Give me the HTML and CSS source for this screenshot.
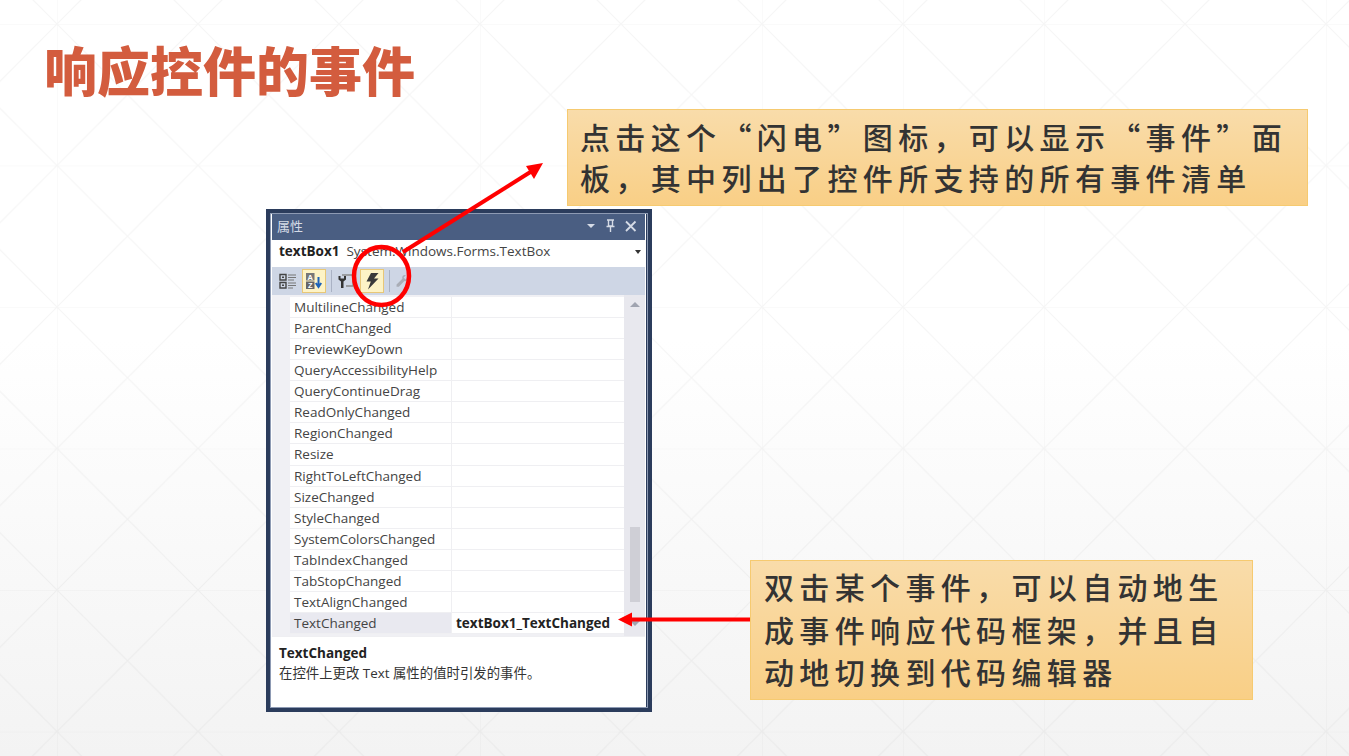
FILE: index.html
```html
<!DOCTYPE html>
<html lang="zh-CN">

<head>
    <meta charset="UTF-8">
    <title>响应控件的事件</title>
    <link rel="stylesheet" href="styles.css">
</head>

<body>
    <div class="slide">
        <!-- fondo de rejilla -->
        <svg class="fondo" width="1349" height="756">
            <defs>
                <pattern id="rejilla" x="57" y="24" width="141" height="141.5" patternUnits="userSpaceOnUse">
                    <path d="M0 0H141M0 0V141.5M0 0L141 141.5M141 0L0 141.5" fill="none" stroke="#000" stroke-opacity="0.035" stroke-width="1"/>
                </pattern>
            </defs>
            <rect width="1349" height="756" fill="url(#rejilla)"/>
        </svg>

        <h1 class="titulo">响应控件的事件</h1>

        <section class="panel">
            <div class="panel-titulo">
                <span class="panel-nombre">属性</span>
                <svg class="panel-iconos" width="52" height="14" viewBox="0 0 52 14">
                    <path d="M0 5H8L4 9Z" fill="#d5dbe6"/>
                    <path d="M20 1H27M21.5 1V7H25.5V1M19.5 7.500H27.5M23.5 8V13" fill="none" stroke="#d5dbe6" stroke-width="1.4"/>
                    <path d="M39 2.500L48.5 12M48.5 2.500L39 12" fill="none" stroke="#d5dbe6" stroke-width="1.8"/>
                </svg>
            </div>
            <div class="panel-objeto">
                <b>textBox1</b>
                <span class="panel-tipo">System.Windows.Forms.TextBox</span>
                <i class="flechita"></i>
            </div>
            <div class="toolbar">
                <span class="tool">
                    <svg width="18" height="18" viewBox="0 0 18 18">
                        <path d="M1 2.500H7V8H1ZM1 10.500H7V16H1Z" fill="none" stroke="#444" stroke-width="1.4"/>
                        <path d="M3 4.500H5V6H3ZM3 12.500H5V14H3Z" fill="#444"/>
                        <path d="M9 3H17M9 5.500H17M9 8H15M9 11H17M9 13.500H17M9 16H14" stroke="#777" stroke-width="1.2"/>
                    </svg>
                </span>
                <span class="tool activo">
                    <svg width="18" height="18" viewBox="0 0 18 18">
                        <rect x="1" y="1" width="8.500" height="7.500" fill="#777"/>
                        <rect x="1" y="9.500" width="8.500" height="7.500" fill="#666"/>
                        <text x="5.200" y="7.600" class="az">A</text>
                        <text x="5.200" y="16" class="az">Z</text>
                        <path d="M13.500 5V14M10.800 11L13.500 15L16.200 11" fill="none" stroke="#1d63b8" stroke-width="2"/>
                    </svg>
                </span>
                <i class="tool-sep"></i>
                <span class="tool">
                    <svg width="18" height="18" viewBox="0 0 18 18">
                        <path d="M5 3H16V14H9" fill="none" stroke="#8a8a8a" stroke-width="1.3"/>
                        <path d="M1.500 4V7.500L4 9.500V16H6.500V9.500L9 7.500V4L7 4V6.500H3.500V4Z" fill="#333"/>
                    </svg>
                </span>
                <span class="tool activo">
                    <svg width="18" height="18" viewBox="0 0 18 18">
                        <path d="M8 1H15.500L11 6.500H15.500L5 17.500L7.800 9.500H3.500Z" fill="#3a3a3a"/>
                    </svg>
                </span>
                <i class="tool-sep"></i>
                <span class="tool llave">
                    <svg width="14" height="14" viewBox="0 0 18 18">
                        <path d="M17 4L13.500 7L11 4.500L14 1.500C11 .5 8.500 3 9.500 6L2 13.500V16.500H5L12 9C15 10 17.500 7.500 17 4Z" fill="#a9adb6"/>
                    </svg>
                </span>
            </div>
            <div class="rejilla">
                <div class="filas">
                    <div class="fila"><span class="nombre">MultilineChanged</span><span class="valor"></span></div>
                    <div class="fila"><span class="nombre">ParentChanged</span><span class="valor"></span></div>
                    <div class="fila"><span class="nombre">PreviewKeyDown</span><span class="valor"></span></div>
                    <div class="fila"><span class="nombre">QueryAccessibilityHelp</span><span class="valor"></span></div>
                    <div class="fila"><span class="nombre">QueryContinueDrag</span><span class="valor"></span></div>
                    <div class="fila"><span class="nombre">ReadOnlyChanged</span><span class="valor"></span></div>
                    <div class="fila"><span class="nombre">RegionChanged</span><span class="valor"></span></div>
                    <div class="fila"><span class="nombre">Resize</span><span class="valor"></span></div>
                    <div class="fila"><span class="nombre">RightToLeftChanged</span><span class="valor"></span></div>
                    <div class="fila"><span class="nombre">SizeChanged</span><span class="valor"></span></div>
                    <div class="fila"><span class="nombre">StyleChanged</span><span class="valor"></span></div>
                    <div class="fila"><span class="nombre">SystemColorsChanged</span><span class="valor"></span></div>
                    <div class="fila"><span class="nombre">TabIndexChanged</span><span class="valor"></span></div>
                    <div class="fila"><span class="nombre">TabStopChanged</span><span class="valor"></span></div>
                    <div class="fila"><span class="nombre">TextAlignChanged</span><span class="valor"></span></div>
                    <div class="fila elegida"><span class="nombre">TextChanged</span><span class="valor">textBox1_TextChanged</span></div>
                </div>
                <div class="scroll">
                    <i class="scroll-arriba"></i>
                    <i class="scroll-barra"></i>
                    <i class="scroll-abajo"></i>
                </div>
            </div>
            <div class="descripcion">
                <b>TextChanged</b>
                <p>在控件上更改 Text 属性的值时引发的事件。</p>
            </div>
        </section>

        <div class="nota nota-arriba">点击这个“闪电”图标，可以显示“事件”面<br>板，其中列出了控件所支持的所有事件清单</div>
        <div class="nota nota-abajo">双击某个事件，可以自动地生<br>成事件响应代码框架，并且自<br>动地切换到代码编辑器</div>

        <!-- marcas rojas encima de la captura -->
        <svg class="marcas" width="1349" height="756">
            <ellipse cx="381.500" cy="276" rx="27.500" ry="29" fill="none" stroke="#f00" stroke-width="4.500"/>
            <path d="M403 252L532 171" fill="none" stroke="#f00" stroke-width="4"/>
            <path d="M543 163L526 166L534 179Z" fill="#f00"/>
            <path d="M750 619.500H630" fill="none" stroke="#f00" stroke-width="4"/>
            <path d="M618 619.500L632 612.500V626.500Z" fill="#f00"/>
        </svg>
    </div>
</body>

</html>
```

FILE: styles.css
```css
/* Estilo general */
body {
    margin: 0;
    font-family: "Noto Sans CJK SC", sans-serif;
    color: #333;
}

.slide {
    position: relative;
    width: 1349px;
    height: 756px;
    padding: 33px 0 0 44px;
    box-sizing: border-box;
    overflow: hidden;
    background: linear-gradient(#fff 0, #fff 340px, #f3f3f3 756px);
}

.fondo,
.marcas {
    position: absolute;
    left: 0;
    top: 0;
}

.titulo {
    position: relative;
    margin: 0;
    font-size: 53px;
    line-height: 72px;
    font-weight: 900;
    color: #d35c3e;
}

/* Ventana de propiedades */
.panel {
    position: relative;
    width: 386px;
    height: 503px;
    margin: 104px 0 0 222px;
    box-sizing: border-box;
    border: 4px solid #2b3c5c;
    border-left-width: 5px;
    border-right-width: 6px;
    outline: 1px solid #8d9ab3;
    outline-offset: -5px;
    display: flex;
    flex-direction: column;
    background: #fff;
    font-family: "Open Sans", "Noto Sans CJK SC", sans-serif;
    font-size: 13.500px;
    padding: 1px;
}

.panel-titulo {
    display: flex;
    align-items: center;
    justify-content: space-between;
    flex: 0 0 26px;
    box-sizing: border-box;
    padding: 0 6px 3px 5px;
    background: #4a5e82;
    color: #d5dbe6;
}

.panel-nombre {
    font-size: 13px;
}

.panel-objeto {
    display: flex;
    align-items: center;
    flex: 0 0 27px;
    box-sizing: border-box;
    padding: 0 4px 5px 7px;
    color: #333;
}

.panel-objeto b {
    color: #222;
    margin-right: 7px;
}

.panel-tipo {
    flex: 1;
    color: #444;
}

.flechita {
    border: 3px solid transparent;
    border-top: 4px solid #333;
    margin-top: 4px;
}

.toolbar {
    display: flex;
    align-items: center;
    gap: 2px;
    flex: 0 0 28px;
    padding-left: 4px;
    background: #ced6e5;
}

.tool {
    display: flex;
    align-items: center;
    justify-content: center;
    width: 24px;
    height: 24px;
    box-sizing: border-box;
}

.tool.activo {
    background: #fdf3c6;
    border: 1px solid #e8c777;
}

.tool.llave {
    margin-left: -2px;
}

.tool-sep {
    width: 1px;
    height: 22px;
    margin-left: 3px;
    background: #aab2c4;
}

.az {
    font: bold 7.500px "Liberation Sans", sans-serif;
    text-anchor: middle;
    fill: #fff;
}

/* Rejilla de eventos */
.rejilla {
    display: flex;
    flex: 0 0 341px;
    background: #f0f0f4;
}

.filas {
    flex: 1;
    padding: 2px 0 0 18px;
}

.fila {
    display: flex;
    height: 21.070px;
    line-height: 20px;
    box-sizing: border-box;
    border-bottom: 1px solid #efeff2;
    background: #fff;
    color: #444;
}

.nombre {
    width: 162px;
    padding-left: 4px;
    box-sizing: border-box;
    border-right: 1px solid #efeff2;
}

.valor {
    flex: 1;
    padding-left: 4px;
    font-weight: 700;
    color: #222;
}

.elegida .nombre {
    background: #e9e9f0;
}

.scroll {
    position: relative;
    width: 21px;
    background: #e8e8ee;
    display: flex;
    flex-direction: column;
    align-items: center;
}

.scroll-arriba {
    margin-top: 7px;
    border: 5px solid transparent;
    border-top: 0;
    border-bottom: 5px solid #a0a4b0;
}

.scroll-barra {
    width: 10px;
    height: 75px;
    margin-top: 220px;
    background: #cfcfd6;
}

.scroll-abajo {
    margin-top: 19px;
    border: 5px solid transparent;
    border-bottom: 0;
    border-top: 5px solid #a0a4b0;
}

.descripcion {
    flex: 1;
    padding: 6px 7px;
    color: #333;
    border-top: 1px solid #efeff2;
}

.descripcion b {
    display: block;
    line-height: 20px;
    color: #222;
}

.descripcion p {
    margin: 0;
    font-size: 13.400px;
    line-height: 20px;
}

/* Notas amarillas */
.nota {
    position: absolute;
    box-sizing: border-box;
    background: linear-gradient(#f9dcaa, #f9cf86);
    border: 1px solid #f6ca70;
    font-size: 30px;
    font-weight: 500;
    letter-spacing: 5.350px;
    white-space: nowrap;
    color: #333;
}

.nota-arriba {
    left: 567px;
    top: 109px;
    width: 741px;
    height: 97px;
    padding: 6px 0 0 12px;
    line-height: 40.500px;
}

.nota-abajo {
    left: 750px;
    top: 560px;
    width: 503px;
    height: 140px;
    padding: 4px 0 0 13px;
    line-height: 42.500px;
}
```
